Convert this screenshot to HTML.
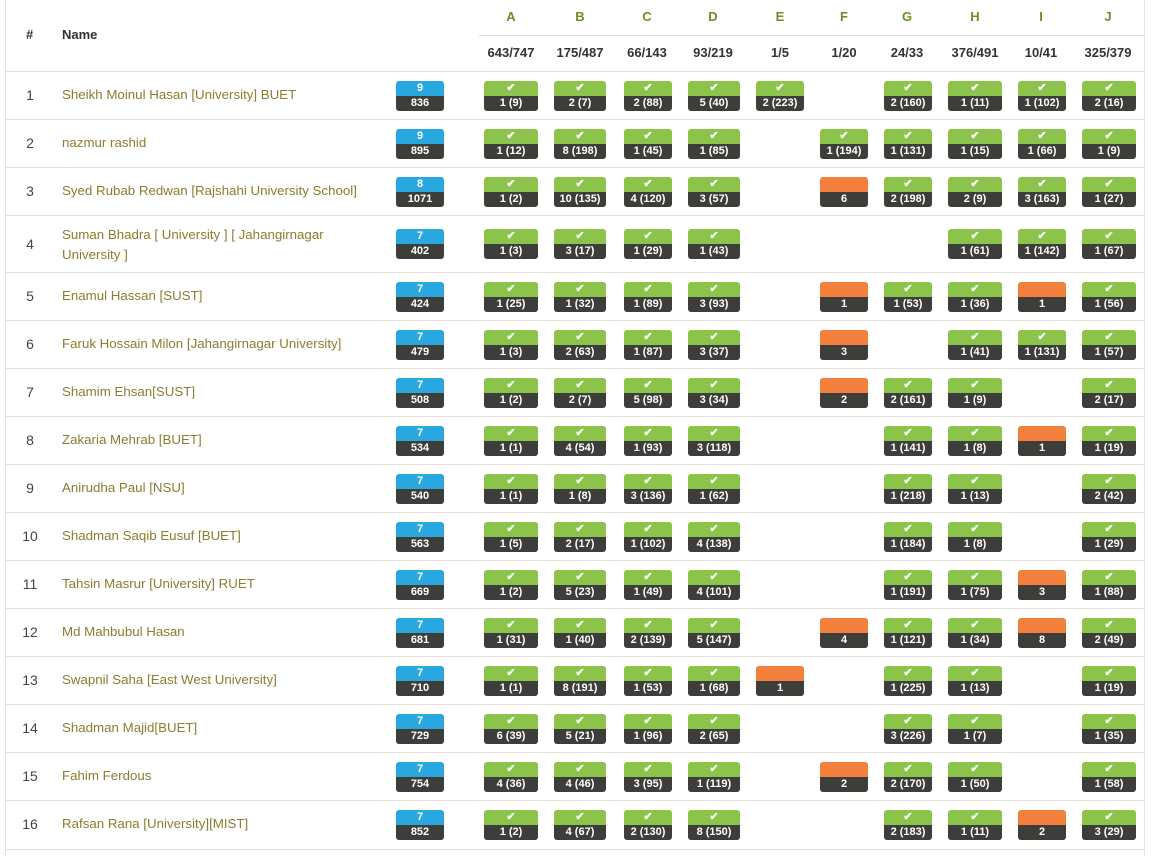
<!DOCTYPE html>
<html><head><meta charset="utf-8"><style>
body{margin:0;background:#fff;font-family:"Liberation Sans",sans-serif;width:1158px;height:856px;overflow:hidden;position:relative}
.vl{position:absolute;top:0;bottom:0;width:1px;background:#e6e2dc}
.h{position:absolute;font-weight:bold;font-size:13px;color:#333}
.hl{position:absolute;font-weight:bold;font-size:13px;color:#6b8f26;width:60px;text-align:center;top:9px}
.hs{position:absolute;font-weight:bold;font-size:13px;color:#333;width:66px;text-align:center;top:45px}
.r{position:absolute;left:5px;width:1139px;border-top:1px solid #e3ddd3}
.n{position:absolute;left:0;width:50px;text-align:center;font-size:14px;color:#444}
.nm{position:absolute;left:57px;font-size:13.3px;color:#8a7d2e;line-height:20px;white-space:nowrap}
.nm2{position:absolute;left:57px;width:285px;font-size:13.3px;color:#8a7d2e;line-height:20px}
.b{position:absolute;height:30px;border-radius:3px;overflow:hidden;text-align:center;font-weight:bold;font-size:11px;color:#fff}
.b i{display:block;height:15px;line-height:15px;font-style:normal;font-size:11px}
.b u{display:block;height:15px;line-height:15px;text-decoration:none;background:#3d3d39}
.s i{background:#29a8e0}.g i{background:#8cc44b}.o i{background:#f4803d}
.S{left:391px;width:48px}
.A{left:479px;width:54px}.B{left:549px;width:52px}.C{left:619px;width:48px}.D{left:683px;width:52px}.E{left:751px;width:48px}.F{left:815px;width:48px}.G{left:879px;width:48px}.H{left:943px;width:54px}.I{left:1013px;width:48px}.J{left:1077px;width:54px}
</style></head><body>
<div class="vl" style="left:5px"></div><div class="vl" style="left:1144px"></div>
<div class="h" style="left:26px;top:27px">#</div>
<div class="h" style="left:62px;top:27px">Name</div>
<div style="position:absolute;left:479px;width:665px;top:35px;border-top:1px solid #e3ddd3"></div>
<div class="hl" style="left:481px">A</div><div class="hl" style="left:550px">B</div><div class="hl" style="left:617px">C</div><div class="hl" style="left:683px">D</div><div class="hl" style="left:750px">E</div><div class="hl" style="left:814px">F</div><div class="hl" style="left:877px">G</div><div class="hl" style="left:945px">H</div><div class="hl" style="left:1011px">I</div><div class="hl" style="left:1078px">J</div>
<div class="hs" style="left:478px">643/747</div><div class="hs" style="left:547px">175/487</div><div class="hs" style="left:614px">66/143</div><div class="hs" style="left:680px">93/219</div><div class="hs" style="left:747px">1/5</div><div class="hs" style="left:811px">1/20</div><div class="hs" style="left:874px">24/33</div><div class="hs" style="left:942px">376/491</div><div class="hs" style="left:1008px">10/41</div><div class="hs" style="left:1075px">325/379</div>

<div class="r" style="top:71px;height:48px"><div class="n" style="top:15px">1</div><div class="nm" style="top:13px">Sheikh Moinul Hasan [University] BUET</div>
<div class="b s S" style="top:9px"><i>9</i><u>836</u></div>
<div class="b g A" style="top:9px"><i>✔</i><u>1 (9)</u></div><div class="b g B" style="top:9px"><i>✔</i><u>2 (7)</u></div><div class="b g C" style="top:9px"><i>✔</i><u>2 (88)</u></div><div class="b g D" style="top:9px"><i>✔</i><u>5 (40)</u></div><div class="b g E" style="top:9px"><i>✔</i><u>2 (223)</u></div><div class="b g G" style="top:9px"><i>✔</i><u>2 (160)</u></div><div class="b g H" style="top:9px"><i>✔</i><u>1 (11)</u></div><div class="b g I" style="top:9px"><i>✔</i><u>1 (102)</u></div><div class="b g J" style="top:9px"><i>✔</i><u>2 (16)</u></div></div>

<div class="r" style="top:119px;height:48px"><div class="n" style="top:15px">2</div><div class="nm" style="top:13px">nazmur rashid</div>
<div class="b s S" style="top:9px"><i>9</i><u>895</u></div>
<div class="b g A" style="top:9px"><i>✔</i><u>1 (12)</u></div><div class="b g B" style="top:9px"><i>✔</i><u>8 (198)</u></div><div class="b g C" style="top:9px"><i>✔</i><u>1 (45)</u></div><div class="b g D" style="top:9px"><i>✔</i><u>1 (85)</u></div><div class="b g F" style="top:9px"><i>✔</i><u>1 (194)</u></div><div class="b g G" style="top:9px"><i>✔</i><u>1 (131)</u></div><div class="b g H" style="top:9px"><i>✔</i><u>1 (15)</u></div><div class="b g I" style="top:9px"><i>✔</i><u>1 (66)</u></div><div class="b g J" style="top:9px"><i>✔</i><u>1 (9)</u></div></div>

<div class="r" style="top:167px;height:48px"><div class="n" style="top:15px">3</div><div class="nm" style="top:13px">Syed Rubab Redwan [Rajshahi University School]</div>
<div class="b s S" style="top:9px"><i>8</i><u>1071</u></div>
<div class="b g A" style="top:9px"><i>✔</i><u>1 (2)</u></div><div class="b g B" style="top:9px"><i>✔</i><u>10 (135)</u></div><div class="b g C" style="top:9px"><i>✔</i><u>4 (120)</u></div><div class="b g D" style="top:9px"><i>✔</i><u>3 (57)</u></div><div class="b o F" style="top:9px"><i></i><u>6</u></div><div class="b g G" style="top:9px"><i>✔</i><u>2 (198)</u></div><div class="b g H" style="top:9px"><i>✔</i><u>2 (9)</u></div><div class="b g I" style="top:9px"><i>✔</i><u>3 (163)</u></div><div class="b g J" style="top:9px"><i>✔</i><u>1 (27)</u></div></div>

<div class="r" style="top:215px;height:57px"><div class="n" style="top:20px">4</div><div class="nm2" style="top:9px">Suman Bhadra [ University ] [ Jahangirnagar University ]</div>
<div class="b s S" style="top:13px"><i>7</i><u>402</u></div>
<div class="b g A" style="top:13px"><i>✔</i><u>1 (3)</u></div><div class="b g B" style="top:13px"><i>✔</i><u>3 (17)</u></div><div class="b g C" style="top:13px"><i>✔</i><u>1 (29)</u></div><div class="b g D" style="top:13px"><i>✔</i><u>1 (43)</u></div><div class="b g H" style="top:13px"><i>✔</i><u>1 (61)</u></div><div class="b g I" style="top:13px"><i>✔</i><u>1 (142)</u></div><div class="b g J" style="top:13px"><i>✔</i><u>1 (67)</u></div></div>

<div class="r" style="top:272px;height:48px"><div class="n" style="top:15px">5</div><div class="nm" style="top:13px">Enamul Hassan [SUST]</div>
<div class="b s S" style="top:9px"><i>7</i><u>424</u></div>
<div class="b g A" style="top:9px"><i>✔</i><u>1 (25)</u></div><div class="b g B" style="top:9px"><i>✔</i><u>1 (32)</u></div><div class="b g C" style="top:9px"><i>✔</i><u>1 (89)</u></div><div class="b g D" style="top:9px"><i>✔</i><u>3 (93)</u></div><div class="b o F" style="top:9px"><i></i><u>1</u></div><div class="b g G" style="top:9px"><i>✔</i><u>1 (53)</u></div><div class="b g H" style="top:9px"><i>✔</i><u>1 (36)</u></div><div class="b o I" style="top:9px"><i></i><u>1</u></div><div class="b g J" style="top:9px"><i>✔</i><u>1 (56)</u></div></div>

<div class="r" style="top:320px;height:48px"><div class="n" style="top:15px">6</div><div class="nm" style="top:13px">Faruk Hossain Milon [Jahangirnagar University]</div>
<div class="b s S" style="top:9px"><i>7</i><u>479</u></div>
<div class="b g A" style="top:9px"><i>✔</i><u>1 (3)</u></div><div class="b g B" style="top:9px"><i>✔</i><u>2 (63)</u></div><div class="b g C" style="top:9px"><i>✔</i><u>1 (87)</u></div><div class="b g D" style="top:9px"><i>✔</i><u>3 (37)</u></div><div class="b o F" style="top:9px"><i></i><u>3</u></div><div class="b g H" style="top:9px"><i>✔</i><u>1 (41)</u></div><div class="b g I" style="top:9px"><i>✔</i><u>1 (131)</u></div><div class="b g J" style="top:9px"><i>✔</i><u>1 (57)</u></div></div>

<div class="r" style="top:368px;height:48px"><div class="n" style="top:15px">7</div><div class="nm" style="top:13px">Shamim Ehsan[SUST]</div>
<div class="b s S" style="top:9px"><i>7</i><u>508</u></div>
<div class="b g A" style="top:9px"><i>✔</i><u>1 (2)</u></div><div class="b g B" style="top:9px"><i>✔</i><u>2 (7)</u></div><div class="b g C" style="top:9px"><i>✔</i><u>5 (98)</u></div><div class="b g D" style="top:9px"><i>✔</i><u>3 (34)</u></div><div class="b o F" style="top:9px"><i></i><u>2</u></div><div class="b g G" style="top:9px"><i>✔</i><u>2 (161)</u></div><div class="b g H" style="top:9px"><i>✔</i><u>1 (9)</u></div><div class="b g J" style="top:9px"><i>✔</i><u>2 (17)</u></div></div>

<div class="r" style="top:416px;height:48px"><div class="n" style="top:15px">8</div><div class="nm" style="top:13px">Zakaria Mehrab [BUET]</div>
<div class="b s S" style="top:9px"><i>7</i><u>534</u></div>
<div class="b g A" style="top:9px"><i>✔</i><u>1 (1)</u></div><div class="b g B" style="top:9px"><i>✔</i><u>4 (54)</u></div><div class="b g C" style="top:9px"><i>✔</i><u>1 (93)</u></div><div class="b g D" style="top:9px"><i>✔</i><u>3 (118)</u></div><div class="b g G" style="top:9px"><i>✔</i><u>1 (141)</u></div><div class="b g H" style="top:9px"><i>✔</i><u>1 (8)</u></div><div class="b o I" style="top:9px"><i></i><u>1</u></div><div class="b g J" style="top:9px"><i>✔</i><u>1 (19)</u></div></div>

<div class="r" style="top:464px;height:48px"><div class="n" style="top:15px">9</div><div class="nm" style="top:13px">Anirudha Paul [NSU]</div>
<div class="b s S" style="top:9px"><i>7</i><u>540</u></div>
<div class="b g A" style="top:9px"><i>✔</i><u>1 (1)</u></div><div class="b g B" style="top:9px"><i>✔</i><u>1 (8)</u></div><div class="b g C" style="top:9px"><i>✔</i><u>3 (136)</u></div><div class="b g D" style="top:9px"><i>✔</i><u>1 (62)</u></div><div class="b g G" style="top:9px"><i>✔</i><u>1 (218)</u></div><div class="b g H" style="top:9px"><i>✔</i><u>1 (13)</u></div><div class="b g J" style="top:9px"><i>✔</i><u>2 (42)</u></div></div>

<div class="r" style="top:512px;height:48px"><div class="n" style="top:15px">10</div><div class="nm" style="top:13px">Shadman Saqib Eusuf [BUET]</div>
<div class="b s S" style="top:9px"><i>7</i><u>563</u></div>
<div class="b g A" style="top:9px"><i>✔</i><u>1 (5)</u></div><div class="b g B" style="top:9px"><i>✔</i><u>2 (17)</u></div><div class="b g C" style="top:9px"><i>✔</i><u>1 (102)</u></div><div class="b g D" style="top:9px"><i>✔</i><u>4 (138)</u></div><div class="b g G" style="top:9px"><i>✔</i><u>1 (184)</u></div><div class="b g H" style="top:9px"><i>✔</i><u>1 (8)</u></div><div class="b g J" style="top:9px"><i>✔</i><u>1 (29)</u></div></div>

<div class="r" style="top:560px;height:48px"><div class="n" style="top:15px">11</div><div class="nm" style="top:13px">Tahsin Masrur [University] RUET</div>
<div class="b s S" style="top:9px"><i>7</i><u>669</u></div>
<div class="b g A" style="top:9px"><i>✔</i><u>1 (2)</u></div><div class="b g B" style="top:9px"><i>✔</i><u>5 (23)</u></div><div class="b g C" style="top:9px"><i>✔</i><u>1 (49)</u></div><div class="b g D" style="top:9px"><i>✔</i><u>4 (101)</u></div><div class="b g G" style="top:9px"><i>✔</i><u>1 (191)</u></div><div class="b g H" style="top:9px"><i>✔</i><u>1 (75)</u></div><div class="b o I" style="top:9px"><i></i><u>3</u></div><div class="b g J" style="top:9px"><i>✔</i><u>1 (88)</u></div></div>

<div class="r" style="top:608px;height:48px"><div class="n" style="top:15px">12</div><div class="nm" style="top:13px">Md Mahbubul Hasan</div>
<div class="b s S" style="top:9px"><i>7</i><u>681</u></div>
<div class="b g A" style="top:9px"><i>✔</i><u>1 (31)</u></div><div class="b g B" style="top:9px"><i>✔</i><u>1 (40)</u></div><div class="b g C" style="top:9px"><i>✔</i><u>2 (139)</u></div><div class="b g D" style="top:9px"><i>✔</i><u>5 (147)</u></div><div class="b o F" style="top:9px"><i></i><u>4</u></div><div class="b g G" style="top:9px"><i>✔</i><u>1 (121)</u></div><div class="b g H" style="top:9px"><i>✔</i><u>1 (34)</u></div><div class="b o I" style="top:9px"><i></i><u>8</u></div><div class="b g J" style="top:9px"><i>✔</i><u>2 (49)</u></div></div>

<div class="r" style="top:656px;height:48px"><div class="n" style="top:15px">13</div><div class="nm" style="top:13px">Swapnil Saha [East West University]</div>
<div class="b s S" style="top:9px"><i>7</i><u>710</u></div>
<div class="b g A" style="top:9px"><i>✔</i><u>1 (1)</u></div><div class="b g B" style="top:9px"><i>✔</i><u>8 (191)</u></div><div class="b g C" style="top:9px"><i>✔</i><u>1 (53)</u></div><div class="b g D" style="top:9px"><i>✔</i><u>1 (68)</u></div><div class="b o E" style="top:9px"><i></i><u>1</u></div><div class="b g G" style="top:9px"><i>✔</i><u>1 (225)</u></div><div class="b g H" style="top:9px"><i>✔</i><u>1 (13)</u></div><div class="b g J" style="top:9px"><i>✔</i><u>1 (19)</u></div></div>

<div class="r" style="top:704px;height:48px"><div class="n" style="top:15px">14</div><div class="nm" style="top:13px">Shadman Majid[BUET]</div>
<div class="b s S" style="top:9px"><i>7</i><u>729</u></div>
<div class="b g A" style="top:9px"><i>✔</i><u>6 (39)</u></div><div class="b g B" style="top:9px"><i>✔</i><u>5 (21)</u></div><div class="b g C" style="top:9px"><i>✔</i><u>1 (96)</u></div><div class="b g D" style="top:9px"><i>✔</i><u>2 (65)</u></div><div class="b g G" style="top:9px"><i>✔</i><u>3 (226)</u></div><div class="b g H" style="top:9px"><i>✔</i><u>1 (7)</u></div><div class="b g J" style="top:9px"><i>✔</i><u>1 (35)</u></div></div>

<div class="r" style="top:752px;height:48px"><div class="n" style="top:15px">15</div><div class="nm" style="top:13px">Fahim Ferdous</div>
<div class="b s S" style="top:9px"><i>7</i><u>754</u></div>
<div class="b g A" style="top:9px"><i>✔</i><u>4 (36)</u></div><div class="b g B" style="top:9px"><i>✔</i><u>4 (46)</u></div><div class="b g C" style="top:9px"><i>✔</i><u>3 (95)</u></div><div class="b g D" style="top:9px"><i>✔</i><u>1 (119)</u></div><div class="b o F" style="top:9px"><i></i><u>2</u></div><div class="b g G" style="top:9px"><i>✔</i><u>2 (170)</u></div><div class="b g H" style="top:9px"><i>✔</i><u>1 (50)</u></div><div class="b g J" style="top:9px"><i>✔</i><u>1 (58)</u></div></div>

<div class="r" style="top:800px;height:48px;border-bottom:1px solid #e3ddd3"><div class="n" style="top:15px">16</div><div class="nm" style="top:13px">Rafsan Rana [University][MIST]</div>
<div class="b s S" style="top:9px"><i>7</i><u>852</u></div>
<div class="b g A" style="top:9px"><i>✔</i><u>1 (2)</u></div><div class="b g B" style="top:9px"><i>✔</i><u>4 (67)</u></div><div class="b g C" style="top:9px"><i>✔</i><u>2 (130)</u></div><div class="b g D" style="top:9px"><i>✔</i><u>8 (150)</u></div><div class="b g G" style="top:9px"><i>✔</i><u>2 (183)</u></div><div class="b g H" style="top:9px"><i>✔</i><u>1 (11)</u></div><div class="b o I" style="top:9px"><i></i><u>2</u></div><div class="b g J" style="top:9px"><i>✔</i><u>3 (29)</u></div></div>
</body></html>
